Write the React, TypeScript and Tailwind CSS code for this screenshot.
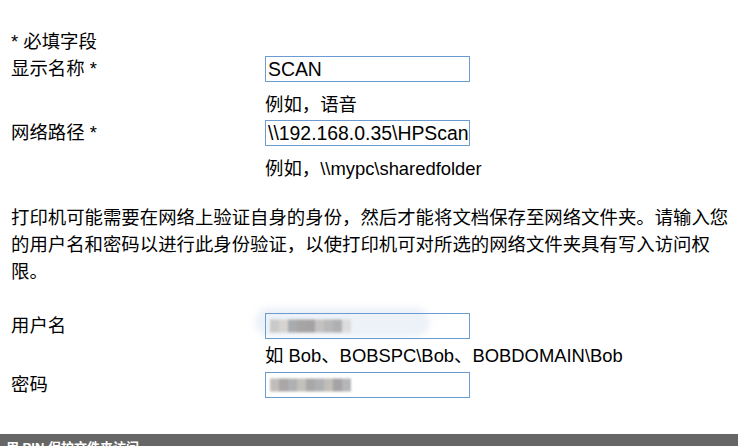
import React from 'react';

const font = { fontFamily: '"Liberation Sans", "Noto Sans CJK SC", sans-serif' };

const userBlocks = ['#c9c9c9', '#d6d3d0', '#a9acaf', '#a7a4a4', '#a5a2a3', '#c3c2c1', '#b8b8b8', '#aeb0b1', '#dcdcdc'];
const passBlocks = ['#c0bdbb', '#a9a6a5', '#aeb0b2', '#c3c0bb', '#a8a8a8', '#aeb0b2', '#c1bdb8', '#a5a3a3', '#b4b6b8'];

function Redacted({ blocks }: { blocks: string[] }) {
  return (
    <div className="absolute left-[4px] top-1/2 -translate-y-1/2 flex blur-[1px]">
      {blocks.map((c, i) => (
        <div key={i} className="w-[9px] h-[13px]" style={{ backgroundColor: c }} />
      ))}
    </div>
  );
}

function Field({ label, value, children }: { label: string; value?: string; children?: React.ReactNode }) {
  return (
    <div className="flex items-center h-[26px]">
      <div className="w-[254px] shrink-0">{label}</div>
      <div className="relative w-[205px] h-[26px] border border-[#6b9bd2] overflow-hidden">
        {value && <div className="pl-[2px] text-[19.4px] leading-[24px] whitespace-nowrap">{value}</div>}
        {children}
      </div>
    </div>
  );
}

export default function App() {
  return (
    <div className="w-[738px] h-[446px] bg-white text-black text-[18.4px] overflow-hidden relative" style={font}>
      <div className="pl-[11px] pr-[4px] pt-[28px]">
        <div className="leading-[27px]">* 必填字段</div>
        <div className="mt-[1px]">
          <Field label="显示名称 *" value="SCAN" />
        </div>
        <div className="pl-[254px] mt-[9px] leading-[27px]">例如，语音</div>
        <div className="mt-[2px]">
          <Field label="网络路径 *" value="\\192.168.0.35\HPScan" />
        </div>
        <div className="pl-[254px] mt-[9px] leading-[27px]">例如，\\mypc\sharedfolder</div>
        <p className="mt-[22px] leading-[27px]">
          打印机可能需要在网络上验证自身的身份，然后才能将文档保存至网络文件夹。请输入您的用户名和密码以进行此身份验证，以使打印机可对所选的网络文件夹具有写入访问权限。
        </p>
        <div className="relative mt-[27.5px]">
          <div className="absolute left-[244px] top-[-6px] w-[175px] h-[30px] rounded-full bg-[#edf2f8] blur-[3px]" />
          <div className="relative">
            <Field label="用户名">
              <Redacted blocks={userBlocks} />
            </Field>
          </div>
        </div>
        <div className="pl-[254px] mt-[3.5px] leading-[27px]">如 Bob、BOBSPC\Bob、BOBDOMAIN\Bob</div>
        <div className="mt-[2.5px]">
          <Field label="密码">
            <Redacted blocks={passBlocks} />
          </Field>
        </div>
      </div>
      <div className="absolute left-0 right-0 top-[434px] h-[30px] bg-[#666666] text-white text-[13px] font-bold pl-[6px] pt-[5px] leading-[18px]">
        用 PIN 保护文件夹访问
      </div>
    </div>
  );
}
